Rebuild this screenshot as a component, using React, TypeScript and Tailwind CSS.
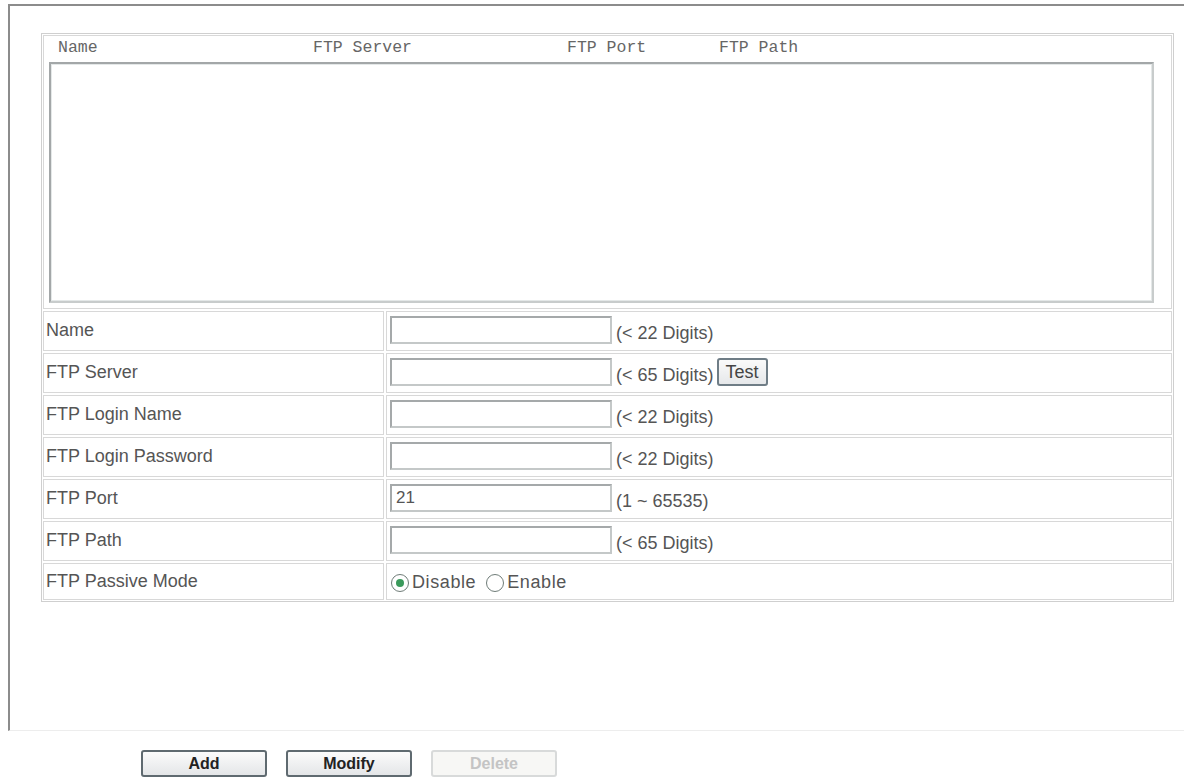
import React, { useState } from 'react';

const fields = [
  { label: 'Name', hint: '(< 22 Digits)', value: '' },
  { label: 'FTP Server', hint: '(< 65 Digits)', value: '', test: true },
  { label: 'FTP Login Name', hint: '(< 22 Digits)', value: '' },
  { label: 'FTP Login Password', hint: '(< 22 Digits)', value: '' },
  { label: 'FTP Port', hint: '(1 ~ 65535)', value: '21' },
  { label: 'FTP Path', hint: '(< 65 Digits)', value: '' },
];

const Radio = ({ checked, onClick }: { checked: boolean; onClick: () => void }) => (
  <span
    onClick={onClick}
    className="w-[18px] h-[18px] rounded-full border-[1.5px] border-[#6f7c78] bg-white flex items-center justify-center cursor-pointer"
  >
    {checked && <span className="w-[8px] h-[8px] rounded-full bg-[#3b9a5c]" />}
  </span>
);

const FtpSettings: React.FC = () => {
  const [passive, setPassive] = useState(false);

  return (
    <div className="w-[1187px] h-[784px] bg-white font-['Liberation_Sans',Arial,sans-serif] text-[#555]">
      <div className="ml-[8px] mt-[4px] w-[1176px] h-[727px] border-t-2 border-l-2 border-[#8c8c8c] border-b border-b-[#ededed] pl-[31px] pt-[27px]">
        <div className="w-[1133px] border border-[#cfcfcf] p-[1px] flex flex-col gap-[2px]">
          {/* server list */}
          <div className="h-[274px] border border-[#d8d8d8] pl-[5px] pt-[1px]">
            <div className="flex h-[22px] items-center pl-[9px] font-['Liberation_Mono','Courier_New',monospace] text-[16.5px] text-[#666]">
              <span className="w-[255px]">Name</span>
              <span className="w-[254px]">FTP Server</span>
              <span className="w-[152px]">FTP Port</span>
              <span>FTP Path</span>
            </div>
            <div className="mt-[3px] w-[1105px] h-[241px] border-2 border-t-[#a3a7a8] border-l-[#a3a7a8] border-r-[#c8cccc] border-b-[#c8cccc] bg-white">
              <div className="w-full h-full border border-[#e4e8e8]" />
            </div>
          </div>

          {fields.map((f) => (
            <div key={f.label} className="flex gap-[2px] h-[40px]">
              <div className="w-[341px] border border-[#d8d8d8] flex items-center pl-[2px] pb-[2px] text-[18px]">
                {f.label}
              </div>
              <div className="flex-1 border border-[#d8d8d8] flex items-center pl-[3px]">
                <input
                  defaultValue={f.value}
                  className="w-[222px] h-[28px] mb-[3px] border-2 border-t-[#a5a9aa] border-l-[#a5a9aa] border-r-[#c4c8c8] border-b-[#c4c8c8] px-[4px] text-[17px] text-[#555] outline-none bg-white"
                />
                <span className="ml-[4px] mt-[5px] text-[18px]">{f.hint}</span>
                {f.test && (
                  <button className="ml-[3px] mb-[3px] h-[28px] px-[7px] border-2 border-[#6f7d86] rounded-[3px] bg-gradient-to-b from-[#fafafa] to-[#e6e8ea] text-[18px] leading-none text-[#444]">
                    Test
                  </button>
                )}
              </div>
            </div>
          ))}

          <div className="flex gap-[2px] h-[37px]">
            <div className="w-[341px] border border-[#d8d8d8] flex items-center pl-[2px] text-[18px]">
              FTP Passive Mode
            </div>
            <div className="flex-1 border border-[#d8d8d8] flex items-center pl-[4px] pt-[2px] text-[18px]">
              <Radio checked={!passive} onClick={() => setPassive(false)} />
              <span className="ml-[3px] tracking-[0.6px]">Disable</span>
              <span className="ml-[10px]">
                <Radio checked={passive} onClick={() => setPassive(true)} />
              </span>
              <span className="ml-[3px] tracking-[0.6px]">Enable</span>
            </div>
          </div>
        </div>
      </div>

      <div className="flex gap-[19px] pl-[141px] pt-[19px]">
        <button className="w-[126px] h-[27px] border-2 border-[#5f6a70] rounded-[3px] bg-gradient-to-b from-[#fbfbfb] to-[#e4e6e8] text-[16px] leading-none font-bold text-[#222]">
          Add
        </button>
        <button className="w-[126px] h-[27px] border-2 border-[#5f6a70] rounded-[3px] bg-gradient-to-b from-[#fbfbfb] to-[#e4e6e8] text-[16px] leading-none font-bold text-[#222]">
          Modify
        </button>
        <button disabled className="w-[126px] h-[27px] border-2 border-[#d8dada] rounded-[3px] bg-[#f7f7f5] text-[16px] leading-none font-bold text-[#c4c4c4]">
          Delete
        </button>
      </div>
    </div>
  );
};

export default FtpSettings;
